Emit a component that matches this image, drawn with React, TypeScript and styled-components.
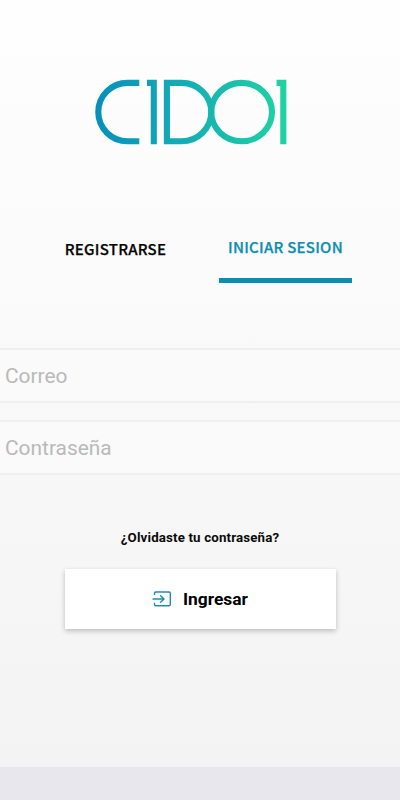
import React from "react";
import styled, { createGlobalStyle } from "styled-components";

const GlobalStyle = createGlobalStyle`
  *, *::before, *::after { box-sizing: border-box; }
  body { margin: 0; }
  button, input { font: inherit; border: 0; border-radius: 0; padding: 0; background: none; }
`;

const Screen = styled.div`
  display: flex;
  flex-direction: column;
  width: 100%;
  height: 800px;
  overflow: hidden;
  font-family: Roboto, sans-serif;
  background: linear-gradient(#fefefe, #fbfbfb 250px, #f3f3f3 767px);
`;

const Header = styled.header`
  display: flex;
  justify-content: center;
  padding: 76px 18px 0 0;
`;

const Logo = styled.svg`
  display: block;
  width: 200px;
  height: 72px;
  fill: none;
  stroke: url(#brand);
  stroke-width: 6.1;
`;

const Tabs = styled.nav`
  display: flex;
  justify-content: space-between;
  padding: 86px 48px 0 49px;
`;

const Tab = styled.button<{ $active?: boolean }>`
  width: 133px;
  height: ${(p) => (p.$active ? 49 : 51)}px;
  padding-bottom: ${(p) => (p.$active ? 18 : 17)}px;
  white-space: nowrap;
  font-family: "Noto Sans CJK SC", sans-serif;
  font-size: 15px;
  font-weight: 500;
  letter-spacing: 0.25px;
  line-height: 20px;
  -webkit-text-stroke: 0.25px currentColor;
  color: ${(p) => (p.$active ? "#0c8db2" : "#050505")};
  border-bottom: 5px solid ${(p) => (p.$active ? "#0c8db2" : "transparent")};
`;

const Form = styled.form`
  display: flex;
  flex-direction: column;
  align-items: center;
  margin-top: 63px;
`;

const Field = styled.input`
  width: 100%;
  height: 55px;
  margin-bottom: 17px;
  padding: 1px 5px 0;
  font-size: 20.9px;
  color: #333;
  border-top: 2px solid #efefef;
  border-bottom: 2px solid #efefef;
  background: #fafafa;
  outline: none;
  &::placeholder { color: #b9b9b9; opacity: 1; }
`;

const Forgot = styled.a`
  margin-top: 37px;
  font-size: 13.3px;
  font-weight: 700;
  letter-spacing: 0.15px;
  line-height: 18px;
  color: #0b0b0b;
`;

const Submit = styled.button`
  display: flex;
  align-items: center;
  justify-content: center;
  gap: 11px;
  width: 271px;
  height: 60px;
  margin-top: 22px;
  font-size: 17.4px;
  font-weight: 700;
  color: #000;
  background: #fff;
  box-shadow: 0 2px 5px rgba(0, 0, 0, 0.24);
`;

const EnterIcon = styled.svg`
  width: 20px;
  height: 16px;
  fill: none;
  stroke: #218fa2;
  stroke-width: 1.4;
`;

const BottomBar = styled.footer`
  flex: none;
  height: 33px;
  margin-top: auto;
  background: #e8e7ee;
`;

export default function App() {
  return (
    <Screen>
      <GlobalStyle />
      <Header>
        <Logo viewBox="91 76 200 72" role="img" aria-label="CIDOI">
          <defs>
            <linearGradient id="brand" gradientUnits="userSpaceOnUse" x1="95" y1="0" x2="287" y2="0">
              <stop offset="0" stopColor="#078fbb" />
              <stop offset="0.5" stopColor="#14b0b5" />
              <stop offset="1" stopColor="#20d3a2" />
            </linearGradient>
          </defs>
          <path d="M139.3 82.9H127.5A29.2 29.2 0 0 0 127.5 141.3H139.3" />
          <path d="M147 82.9H153.8V144.2" />
          <path d="M166.9 82.9H181.5A29.8 29.2 0 0 1 181.5 141.3H166.9Z" />
          <ellipse cx="241.6" cy="112.1" rx="30.4" ry="29.2" />
          <path d="M276.6 82.9H283.3V144.2" />
        </Logo>
      </Header>
      <Tabs>
        <Tab type="button">REGISTRARSE</Tab>
        <Tab type="button" $active>INICIAR SESION</Tab>
      </Tabs>
      <Form>
        <Field type="email" placeholder="Correo" />
        <Field type="password" placeholder="Contraseña" />
        <Forgot>¿Olvidaste tu contraseña?</Forgot>
        <Submit type="button">
          <EnterIcon viewBox="0 0 20 16" aria-hidden="true">
            <path d="M2.5 4V2.3Q2.5 1 3.8 1H17Q18.3 1 18.3 2.3V13.5Q18.3 14.8 17 14.8H3.8Q2.5 14.8 2.5 13.5V11.8M0.5 8H12M8.2 4.2L12 8L8.2 11.8" />
          </EnterIcon>
          Ingresar
        </Submit>
      </Form>
      <BottomBar />
    </Screen>
  );
}
